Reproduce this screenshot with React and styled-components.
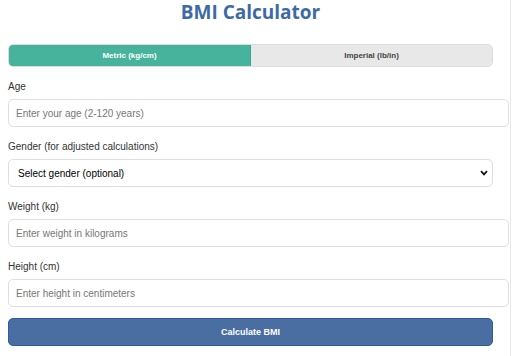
import React, { useState } from "react";
import styled, { createGlobalStyle } from "styled-components";

const Global = createGlobalStyle`
  html, body { margin: 0; padding: 0; background: #fff; }
  body { font-family: "Liberation Sans", Arial, sans-serif; overflow: hidden; }
  * { box-sizing: content-box; }
`;

const Page = styled.div`
  width: 485px;
  height: 356px;
  padding: 0 17px 0 8px;
  border-right: 1px solid #e8e8e8;
  overflow: hidden;
`;

const Title = styled.h1`
  margin: 0 0 20px;
  padding: 0;
  font-family: "Open Sans", sans-serif;
  font-weight: 700;
  font-size: 19px;
  line-height: 24px;
  color: #3d6aa6;
  text-align: center;
`;

const Toggle = styled.div`
  display: flex;
  height: 21px;
  border: 1px solid #dcdcdc;
  border-radius: 5px;
  overflow: hidden;
  margin-bottom: 14px;
`;

const ToggleButton = styled.button`
  flex: 1;
  border: none;
  margin: 0;
  padding: 0;
  font-family: "Liberation Sans", Arial, sans-serif;
  font-size: 8px;
  font-weight: 700;
  color: ${(p) => (p.$active ? "#fff" : "#444")};
  background: ${(p) => (p.$active ? "#47b39c" : "#e8e8e8")};
  border-right: ${(p) => (p.$active ? "1px solid #3aa88f" : "none")};
  cursor: pointer;
`;

const Group = styled.div`
  margin-bottom: 14px;
  position: relative;
`;

const Label = styled.label`
  display: block;
  font-size: 10px;
  line-height: 12px;
  color: #333;
  margin-bottom: 6px;
`;

const Input = styled.input`
  display: block;
  width: 100%;
  height: 26px;
  padding: 0 7px;
  border: 1px solid #dedede;
  border-radius: 5px;
  font-family: "Liberation Sans", Arial, sans-serif;
  font-size: 10px;
  color: #222;
  outline: none;
  &::placeholder { color: #777; }
`;

const SelectWrap = styled.div`
  position: relative;
`;

const Select = styled.select`
  display: block;
  box-sizing: border-box;
  width: 100%;
  height: 28px;
  padding: 0 9px;
  border: 1px solid #dedede;
  border-radius: 5px;
  background: #fff;
  appearance: none;
  font-family: "Liberation Sans", Arial, sans-serif;
  font-size: 10px;
  color: #000;
  outline: none;
`;

const Chevron = styled.svg`
  position: absolute;
  right: 5px;
  top: 11px;
  width: 8px;
  height: 6px;
  pointer-events: none;
`;

const Submit = styled.button`
  display: block;
  width: 100%;
  box-sizing: border-box;
  height: 28px;
  margin-top: -3px;
  border: 1px solid #2c5d9f;
  border-radius: 5px;
  background: #4a6da2;
  color: #fff;
  font-family: "Liberation Sans", Arial, sans-serif;
  font-size: 9px;
  font-weight: 700;
  cursor: pointer;
`;

export default function App() {
  const [unit, setUnit] = useState("metric");
  return (
    <>
      <Global />
      <Page>
        <Title>BMI Calculator</Title>
        <Toggle>
          <ToggleButton $active={unit === "metric"} onClick={() => setUnit("metric")}>
            Metric (kg/cm)
          </ToggleButton>
          <ToggleButton $active={unit === "imperial"} onClick={() => setUnit("imperial")}>
            Imperial (lb/in)
          </ToggleButton>
        </Toggle>
        <Group>
          <Label>Age</Label>
          <Input placeholder="Enter your age (2-120 years)" />
        </Group>
        <Group>
          <Label>Gender (for adjusted calculations)</Label>
          <SelectWrap>
            <Select defaultValue="">
              <option value="">Select gender (optional)</option>
              <option value="male">Male</option>
              <option value="female">Female</option>
            </Select>
            <Chevron viewBox="0 0 8 6">
              <path d="M1 1.2 L4 4.4 L7 1.2" fill="none" stroke="#111" strokeWidth="1.7" />
            </Chevron>
          </SelectWrap>
        </Group>
        <Group>
          <Label>Weight (kg)</Label>
          <Input placeholder="Enter weight in kilograms" />
        </Group>
        <Group>
          <Label>Height (cm)</Label>
          <Input placeholder="Enter height in centimeters" />
        </Group>
        <Submit>Calculate BMI</Submit>
      </Page>
    </>
  );
}
